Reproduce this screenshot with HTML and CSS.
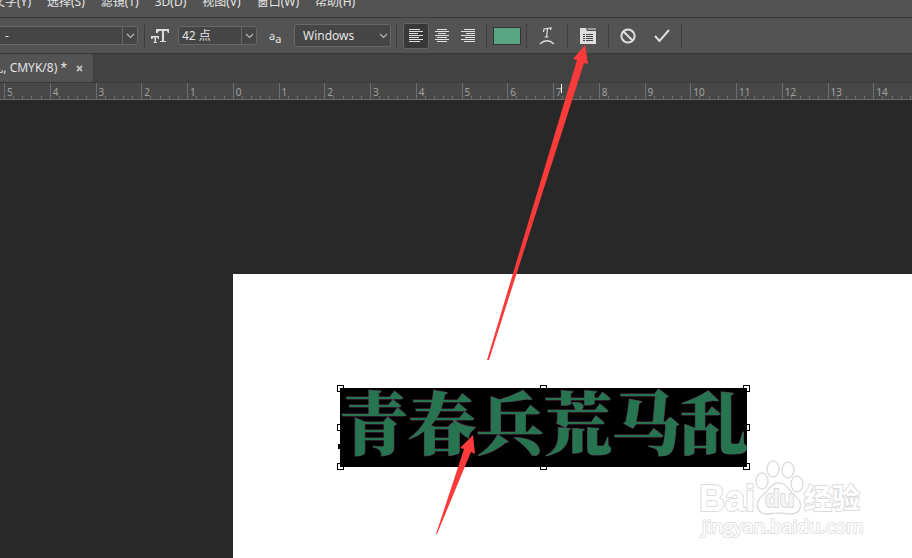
FILE: index.html
```html
<!DOCTYPE html>
<html lang="zh-CN">
<head>
<meta charset="utf-8">
<meta name="viewport" content="width=device-width, initial-scale=1">
<title>CMYK/8</title>
<link rel="stylesheet" href="styles.css">
</head>
<body>
<nav class="menu">
  <a href="#">文字(Y)</a><a href="#">选择(S)</a><a href="#">滤镜(T)</a><a href="#">3D(D)</a><a href="#">视图(V)</a><a href="#">窗口(W)</a><a href="#">帮助(H)</a>
</nav>

<div class="options">
  <div class="combo combo-style">
    <input type="text" value="-" aria-label="字体样式">
    <button type="button" aria-label="选择字体样式"><svg width="9" height="6" viewBox="0 0 9 6"><path d="M1 1l3.500 3.500L8 1"/></svg></button>
  </div>
  <span class="rule"></span>
  <svg class="icon-size" width="18" height="16" viewBox="0 0 18 16"><path d="M5 1h13v4h-1l-1-2h-3v10h2v1H9v-1h2V3H8L6.500 5H5zM0 8h8v3H7l-.5-1.500H5V14h1v1H2.500v-1h1V9.500H2L1.500 11H0z"/></svg>
  <div class="combo combo-size">
    <input type="text" value="42 点" aria-label="字体大小">
    <button type="button" aria-label="选择字体大小"><svg width="9" height="6" viewBox="0 0 9 6"><path d="M1 1l3.500 3.500L8 1"/></svg></button>
  </div>
  <span class="aa">a<span>a</span></span>
  <div class="select">
    <select aria-label="消除锯齿"><option>Windows</option></select>
    <svg width="9" height="6" viewBox="0 0 9 6"><path d="M1 1l3.500 3.500L8 1"/></svg>
  </div>
  <span class="rule"></span>
  <div class="aligns">
    <button type="button" class="on" aria-label="左对齐"><svg width="14" height="14" viewBox="0 0 14 14"><path d="M0 .5h11M0 2.500h14M0 4.500h9M0 6.500h14M0 8.500h10M0 10.500h14M0 12.500h11"/></svg></button>
    <button type="button" aria-label="居中"><svg width="14" height="14" viewBox="0 0 14 14"><path d="M2 .5h10M0 2.500h14M3 4.500h8M0 6.500h14M2 8.500h10M0 10.500h14M2 12.500h10"/></svg></button>
    <button type="button" aria-label="右对齐"><svg width="14" height="14" viewBox="0 0 14 14"><path d="M3 .5h11M0 2.500h14M5 4.500h9M0 6.500h14M4 8.500h10M0 10.500h14M3 12.500h11"/></svg></button>
  </div>
  <span class="rule"></span>
  <button type="button" class="swatch" aria-label="文本颜色"></button>
  <span class="rule"></span>
  <button type="button" class="tool" aria-label="变形文字"><svg width="16" height="18" viewBox="0 0 16 18"><path class="line" d="M4.500 5l.5-3 7-1-.5 2M8.500 2L7.500 10M5.500 10h4M1 17q7-6.500 14 0"/></svg></button>
  <span class="rule"></span>
  <button type="button" class="tool" aria-label="字符面板"><svg width="16" height="16" viewBox="0 0 16 16"><path class="solid" d="M0 0h6l1 3h9v13H0z"/><path class="tabfill" d="M7 0h9v2H8z"/><path class="lines" d="M3 6.500h2M6 6.500h7M3 8.500h2M6 8.500h7M3 10.500h2M6 10.500h7M3 12.500h2M6 12.500h7"/></svg></button>
  <span class="rule"></span>
  <div class="actions">
    <button type="button" aria-label="取消"><svg width="16" height="16" viewBox="0 0 16 16"><path class="bold" d="M8 1.500a6.500 6.500 0 1 0 .01 0M3.500 3.500l9 9"/></svg></button>
    <button type="button" aria-label="提交"><svg width="16" height="16" viewBox="0 0 16 16"><path class="bold" d="M1 8l4.500 5L15 2"/></svg></button>
  </div>
  <span class="rule"></span>
</div>

<div class="tabs">
  <div class="tab"><span class="tab-title">乱, CMYK/8) *</span><button type="button" aria-label="关闭"><svg width="7" height="7" viewBox="0 0 7 7"><path d="M1 1l5 5M6 1L1 6"/></svg></button></div>
</div>

<div class="ruler">
  <ol>
    <li><b>5</b><i></i><i></i><i></i><i></i></li>
    <li><b>4</b><i></i><i></i><i></i><i></i></li>
    <li><b>3</b><i></i><i></i><i></i><i></i></li>
    <li><b>2</b><i></i><i></i><i></i><i></i></li>
    <li><b>1</b><i></i><i></i><i></i><i></i></li>
    <li><b>0</b><i></i><i></i><i></i><i></i></li>
    <li><b>1</b><i></i><i></i><i></i><i></i></li>
    <li><b>2</b><i></i><i></i><i></i><i></i></li>
    <li><b>3</b><i></i><i></i><i></i><i></i></li>
    <li><b>4</b><i></i><i></i><i></i><i></i></li>
    <li><b>5</b><i></i><i></i><i></i><i></i></li>
    <li><b>6</b><i></i><i></i><i></i><i></i></li>
    <li><b>7</b><i></i><i></i><i></i><i></i></li>
    <li><b>8</b><i></i><i></i><i></i><i></i></li>
    <li><b>9</b><i></i><i></i><i></i><i></i></li>
    <li><b>10</b><i></i><i></i><i></i><i></i></li>
    <li><b>11</b><i></i><i></i><i></i><i></i></li>
    <li><b>12</b><i></i><i></i><i></i><i></i></li>
    <li><b>13</b><i></i><i></i><i></i><i></i></li>
    <li><b>14</b><i></i><i></i><i></i><i></i></li>
  </ol>
  <span class="marker"></span>
</div>

<main class="workspace">
  <div class="page">
    <div class="frame">
      <span class="handle t l"></span><span class="handle t c"></span><span class="handle t r"></span>
      <span class="handle m l"></span><span class="handle m r"></span>
      <span class="handle b l"></span><span class="handle b c"></span><span class="handle b r"></span>
      <span class="anchor"></span>
      <div class="type">青春兵荒马乱</div>
    </div>
  </div>
</main>

<svg class="watermark" width="170" height="90" viewBox="0 0 170 90">
  <g class="mark">
    <ellipse cx="64" cy="24" rx="6" ry="8"/><ellipse cx="75" cy="12" rx="6" ry="8"/><ellipse cx="90" cy="13" rx="6" ry="8"/><ellipse cx="99" cy="27" rx="6" ry="8"/>
    <path d="M81 26c9 0 10 9 16 13 9 7 6 17-3 18-5 0-8-1-13-1s-8 1-13 1c-9-1-12-11-4-18 6-4 8-13 17-13z"/>
  </g>
  <g class="words">
    <text class="bai" x="1" y="54">Bai</text>
    <text class="du" x="67" y="50">du</text>
    <text class="cn" x="106" y="52">经验</text>
    <text class="url" x="4" y="76">jingyan.baidu.com</text>
  </g>
</svg>

<svg class="arrows" width="912" height="558" viewBox="0 0 912 558">
  <path d="M487 360L577 60 573 59 585 45 588 64 584 63 489 360zM436 534L464 449 460 448 473 435 475 454 471 452 437 534z"/>
</svg>
</body>
</html>
```
FILE: styles.css
```css
* { box-sizing: border-box; }

body {
  margin: 0;
  min-height: 100vh;
  display: flex;
  flex-direction: column;
  position: relative;
  overflow: hidden;
  background: #282828;
  color: #e4e4e4;
  font: 12px/16px "Noto Sans", "Noto Sans CJK SC", sans-serif;
}

button, input, select {
  margin: 0;
  padding: 0;
  border: 0;
  background: none;
  color: inherit;
  font: inherit;
}

svg { display: block; flex: none; }

.menu {
  display: flex;
  align-items: flex-end;
  gap: 16px;
  height: 18px;
  padding-bottom: 7px;
  margin-left: -7px;
  overflow: hidden;
  background: #535353;
  border-bottom: 1px solid #3a3a3a;
  white-space: nowrap;
}
.menu a { color: inherit; text-decoration: none; }

.options {
  display: flex;
  align-items: center;
  height: 36px;
  background: #535353;
  border-bottom: 1px solid #393939;
}
.options > * { flex: none; }

.rule { width: 1px; height: 24px; background: #3d3d3d; }

.combo {
  display: flex;
  height: 19px;
  background: #454545;
  border: 1px solid #666;
  border-radius: 3px;
}
.combo input { flex: 1; min-width: 0; padding-left: 3px; }
.combo button {
  width: 15px;
  border-left: 1px solid #666;
  display: grid;
  place-items: center;
}
.combo path, .select path { fill: none; stroke: #b8b8b8; stroke-width: 1.2; }
.combo-style { width: 138px; margin-right: 6px; border-left: 0; border-radius: 0 3px 3px 0; }
.combo-style input { padding-left: 5px; }
.combo-size { width: 79px; margin-left: 9px; }
.icon-size { margin-left: 6px; fill: #dcdcdc; }

.aa { width: 16px; margin: 0 9px 0 12px; font-size: 11px; line-height: 20px; }
.aa span { position: relative; top: 3px; }

.select { position: relative; width: 97px; height: 23px; margin-right: 5px; }
.select select {
  width: 100%;
  height: 100%;
  padding-left: 8px;
  appearance: none;
  background: #454545;
  border: 1px solid #666;
  border-radius: 3px;
}
.select svg { position: absolute; right: 3px; top: 9px; }

.aligns { display: flex; margin: 0 5px 0 6px; }
.aligns button {
  width: 26px;
  height: 26px;
  display: grid;
  place-items: center;
  border: 1px solid transparent;
  border-radius: 3px;
}
.aligns .on { background: #383838; border-color: #646464; }
.aligns path { stroke: #e0e0e0; }

.swatch {
  width: 28px;
  height: 18px;
  margin: 0 5px 0 6px;
  background: #5aa583;
  border: 1px solid #333;
}

.tool { width: 40px; height: 24px; display: grid; place-items: center; }
.actions { display: flex; gap: 18px; padding: 0 11px; }
.line, .bold { fill: none; stroke: #dedede; stroke-width: 1.2; }
.bold { stroke-width: 2; }
.solid { fill: #dedede; }
.tabfill { fill: #999; }
.lines { stroke: #444; }

.tabs {
  display: flex;
  height: 29px;
  background: #424242;
  border-bottom: 1px solid #393939;
}
.tab {
  display: flex;
  align-items: center;
  width: 94px;
  padding-right: 10px;
  justify-content: flex-end;
  background: #535353;
  border-right: 1px solid #393939;
  white-space: nowrap;
}
.tab-title { margin-right: 9px; }
.tab path { stroke: #bcbcbc; stroke-width: 2; }

.ruler {
  position: relative;
  height: 17px;
  background: #484848;
  border-bottom: 1px solid #6a6a6a;
}
.ruler ol {
  display: grid;
  grid-template-columns: repeat(20, 1fr);
  height: 16px;
  margin: 0 -7px 0 4px;
  padding: 0;
  list-style: none;
}
.ruler li { display: grid; grid-template-columns: repeat(5, minmax(0, 1fr)); align-items: end; }
.ruler b {
  height: 16px;
  padding-left: 2px;
  border-left: 1px solid #6e6e6e;
  color: #a0a0a0;
  font-size: 10px;
  line-height: 18px;
  font-weight: normal;
}
.ruler i { height: 3px; border-left: 1px solid #6e6e6e; }
.marker { position: absolute; left: 561px; top: 1px; width: 1px; height: 9px; background: #fff; }

.workspace { flex: 1; display: flex; padding: 174px 0 0 233px; }
.page { flex: 1; padding: 114px 0 0 107px; background: #fff; }

.frame { position: relative; width: 407px; height: 79px; }
.type {
  position: relative;
  height: 100%;
  background: #000;
  color: #277451;
  font: 900 68px/64px "Noto Serif CJK SC", "Noto Sans CJK SC", serif;
  -webkit-text-stroke: 1px #5c3350;
  paint-order: stroke fill;
  white-space: nowrap;
}
.handle { position: absolute; width: 7px; height: 7px; background: #fff; border: 1px solid #000; }
.t { top: -3px; }
.m { top: 36px; }
.b { bottom: -3px; }
.l { left: -3px; }
.c { left: 200px; }
.r { right: -3px; }
.anchor { position: absolute; left: -2px; top: 56px; width: 5px; height: 5px; background: #000; }

.watermark { position: absolute; left: 698px; top: 457px; }
.mark { fill: #fff; stroke: #dedede; stroke-width: 1.5; }
.words {
  fill: #fff;
  stroke: #dcdcdc;
  stroke-width: 2;
  paint-order: stroke fill;
  font-family: "Liberation Sans", "Noto Sans CJK SC", sans-serif;
  font-weight: bold;
}
.bai { font-size: 36px; }
.du { font-size: 24px; fill: #f4f4f4; }
.cn { font-size: 28px; }
.url { font: 19px "Open Sans", sans-serif; stroke: #e2e2e2; }

.arrows { position: absolute; left: 0; top: 0; pointer-events: none; }
.arrows path { fill: #fb3a3a; }
```
